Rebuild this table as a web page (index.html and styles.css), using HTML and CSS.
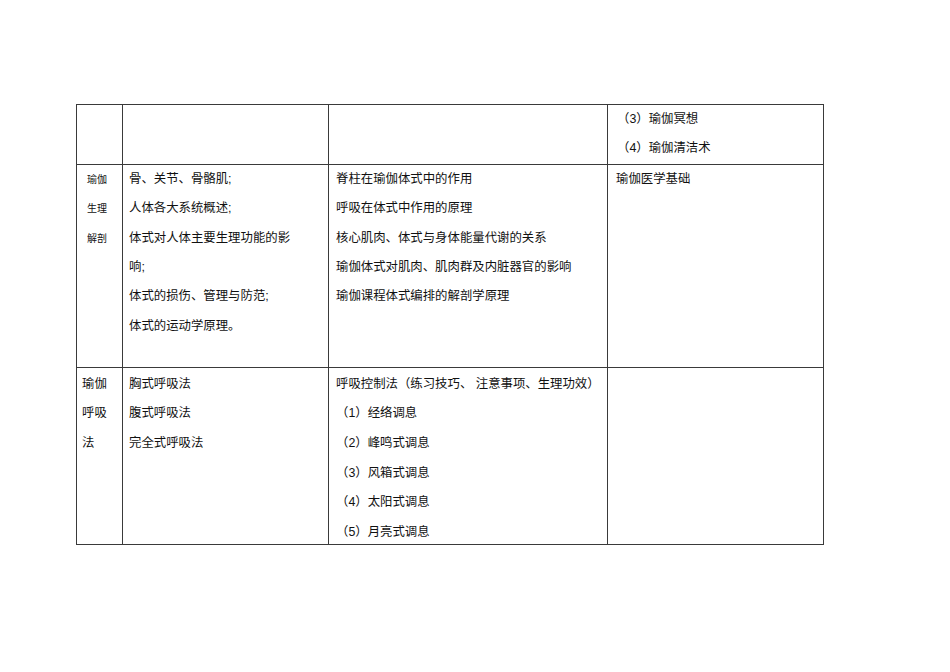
FILE: index.html
```html
<!DOCTYPE html>
<html lang="zh">
<head>
<meta charset="utf-8">
<link rel="stylesheet" href="styles.css">
</head>
<body>
<div class="page">
<table class="grid">
  <colgroup>
    <col class="c1"><col class="c2"><col class="c3"><col class="c4">
  </colgroup>
  <tr class="r1">
    <td></td>
    <td></td>
    <td></td>
    <td class="indent">
      <div class="ln">（3）瑜伽冥想</div>
      <div class="ln">（4）瑜伽清洁术</div>
    </td>
  </tr>
  <tr class="r2">
    <td class="small">
      <div class="ln">瑜伽</div>
      <div class="ln">生理</div>
      <div class="ln">解剖</div>
    </td>
    <td>
      <div class="ln">骨、关节、骨骼肌;</div>
      <div class="ln">人体各大系统概述;</div>
      <div class="ln">体式对人体主要生理功能的影</div>
      <div class="ln">响;</div>
      <div class="ln">体式的损伤、管理与防范;</div>
      <div class="ln">体式的运动学原理。</div>
    </td>
    <td>
      <div class="ln">脊柱在瑜伽体式中的作用</div>
      <div class="ln">呼吸在体式中作用的原理</div>
      <div class="ln">核心肌肉、体式与身体能量代谢的关系</div>
      <div class="ln">瑜伽体式对肌肉、肌肉群及内脏器官的影响</div>
      <div class="ln">瑜伽课程体式编排的解剖学原理</div>
    </td>
    <td>
      <div class="ln">瑜伽医学基础</div>
    </td>
  </tr>
  <tr class="r3">
    <td class="first">
      <div class="ln">瑜伽</div>
      <div class="ln">呼吸</div>
      <div class="ln">法</div>
    </td>
    <td>
      <div class="ln">胸式呼吸法</div>
      <div class="ln">腹式呼吸法</div>
      <div class="ln">完全式呼吸法</div>
    </td>
    <td>
      <div class="ln">呼吸控制法（练习技巧、 注意事项、生理功效）</div>
      <div class="ln">（1）经络调息</div>
      <div class="ln">（2）峰鸣式调息</div>
      <div class="ln">（3）风箱式调息</div>
      <div class="ln">（4）太阳式调息</div>
      <div class="ln">（5）月亮式调息</div>
    </td>
    <td></td>
  </tr>
</table>
</div>
</body>
</html>
```
FILE: styles.css
```css
html, body {
  margin: 0;
  padding: 0;
  background: #ffffff;
}
body {
  font-family: "Liberation Sans", "Noto Sans CJK SC", sans-serif;
  font-size: 12.4px;
  color: #111111;
}
.page {
  padding: 104px 0 0 76px;
}
.grid {
  border-collapse: collapse;
  table-layout: fixed;
  width: 747px;
}
.c1 { width: 46px; }
.c2 { width: 206px; }
.c3 { width: 279px; }
.c4 { width: 216px; }
.grid td {
  border: 1px solid #3a3a3a;
  vertical-align: top;
  padding: 0 4px 0 6px;
  white-space: nowrap;
  overflow: hidden;
}
.grid td:nth-child(3) { padding-left: 7px; }
.grid td:nth-child(4) { padding-left: 8px; }
.grid td.indent { padding-left: 9px; }
.r1 { height: 58px; }
.r2 { height: 203px; }
.r3 { height: 176px; }
.ln {
  height: 29.4px;
  line-height: 29.4px;
}
.r3 td { padding-top: 2px; }
.r3 .ln {
  height: 29.6px;
  line-height: 29.6px;
}
.r3 .ln:last-child {
  height: 26px;
}
.small {
  font-size: 10px;
}
.grid td.small { padding-left: 10px; }
.grid td.first { padding-left: 5px; }
```
